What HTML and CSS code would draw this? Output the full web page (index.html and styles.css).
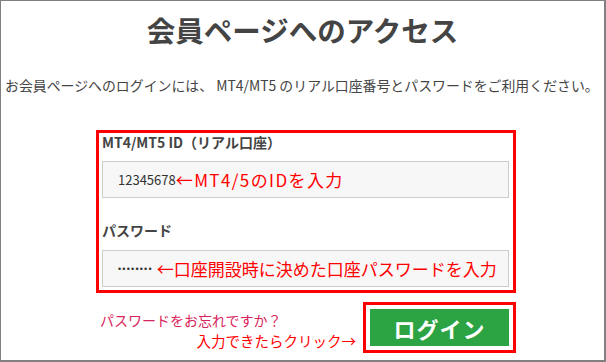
FILE: index.html
```html
<!DOCTYPE html>
<html lang="ja">
<head>
    <meta charset="UTF-8">
    <meta name="viewport" content="width=device-width, initial-scale=1.0">
    <title>会員ページへのアクセス</title>
    <link rel="stylesheet" href="styles.css">
</head>
<body>
  <div class="page">
    <h1 class="title">会員ページへのアクセス</h1>
    <p class="lead">お会員ページへのログインには、 MT4/MT5 のリアル口座番号とパスワードをご利用ください。</p>

    <form class="login-form" onsubmit="return false;">
      <div class="fields">
        <label class="field-label">MT4/MT5 ID（リアル口座）</label>
        <div class="field-input">
          <span class="value">12345678</span><span class="note note-id">←MT4/5のIDを入力</span>
        </div>

        <label class="field-label">パスワード</label>
        <div class="field-input">
          <span class="dots">••••••••</span><span class="note">←口座開設時に決めた口座パスワードを入力</span>
        </div>
      </div>

      <div class="actions">
        <div class="hints">
          <a class="forgot" href="#">パスワードをお忘れですか？</a>
          <span class="click-note">入力できたらクリック→</span>
        </div>
        <div class="btn-frame">
          <button class="btn-login" type="submit">ログイン</button>
        </div>
      </div>
    </form>
  </div>
</body>
</html>
```

FILE: styles.css
```css
/* Estilo geral */
html, body {
    margin: 0;
    padding: 0;
    background: #fff;
}

body {
    font-family: "Noto Sans CJK JP", "Noto Sans", sans-serif;
    color: #444;
}

.page {
    box-sizing: border-box;
    width: 606px;
    height: 362px;
    border: 1px solid #808080;
    border-right-width: 2px;
    border-bottom-width: 2px;
    overflow: hidden;
}

.title {
    margin: 11px 0 0;
    font-size: 28.5px;
    line-height: 36px;
    font-weight: bold;
    text-align: center;
    color: #444;
}

.lead {
    margin: 27px 0 0 4px;
    font-size: 13.9px;
    line-height: 20px;
    white-space: nowrap;
    color: #444;
}

/* Formulario */
.login-form {
    margin: 35px 0 0 95px;
    width: 420px;
}

.fields {
    box-sizing: border-box;
    width: 420px;
    border: 3px solid #f00;
    padding: 0 4px 3px 3px;
}

.field-label {
    display: block;
    font-size: 14px;
    line-height: 18px;
    font-weight: bold;
    color: #444;
}

.field-input {
    box-sizing: border-box;
    height: 37px;
    margin: 10px 0 23px;
    padding-left: 15px;
    border: 1px solid #ccc;
    background: #f7f7f7;
    display: flex;
    align-items: center;
}

.field-label + .field-input {
    margin-top: 10px;
}

.field-input:last-child {
    margin: 11px 0 0;
}

.value {
    font-size: 13px;
    color: #333;
}

.dots {
    font-family: "Liberation Sans", Arial, sans-serif;
    font-size: 9px;
    letter-spacing: 1.2px;
    color: #333;
    margin-right: 4px;
}

.note {
    font-size: 17px;
    color: #f00;
}

.note-id {
    letter-spacing: 1.4px;
}

/* Boton */
.actions {
    display: flex;
    align-items: flex-start;
    margin: 9px 0 0 4px;
    width: 416px;
}

.hints {
    flex: 1;
    display: flex;
    flex-direction: column;
    padding-top: 9px;
    margin-right: 7px;
}

.forgot {
    font-size: 14px;
    line-height: 18px;
    color: #d8245c;
    text-decoration: none;
}

.click-note {
    margin-top: 2px;
    font-size: 14.5px;
    line-height: 20px;
    text-align: right;
    color: #f00;
    white-space: nowrap;
}

.btn-frame {
    border: 3px solid #f00;
    padding: 4px;
}

.btn-login {
    display: block;
    width: 139px;
    height: 37px;
    border: none;
    background: #2ca444;
    color: #fff;
    font-family: inherit;
    font-size: 22px;
    font-weight: bold;
    letter-spacing: 1px;
    cursor: pointer;
}
```
